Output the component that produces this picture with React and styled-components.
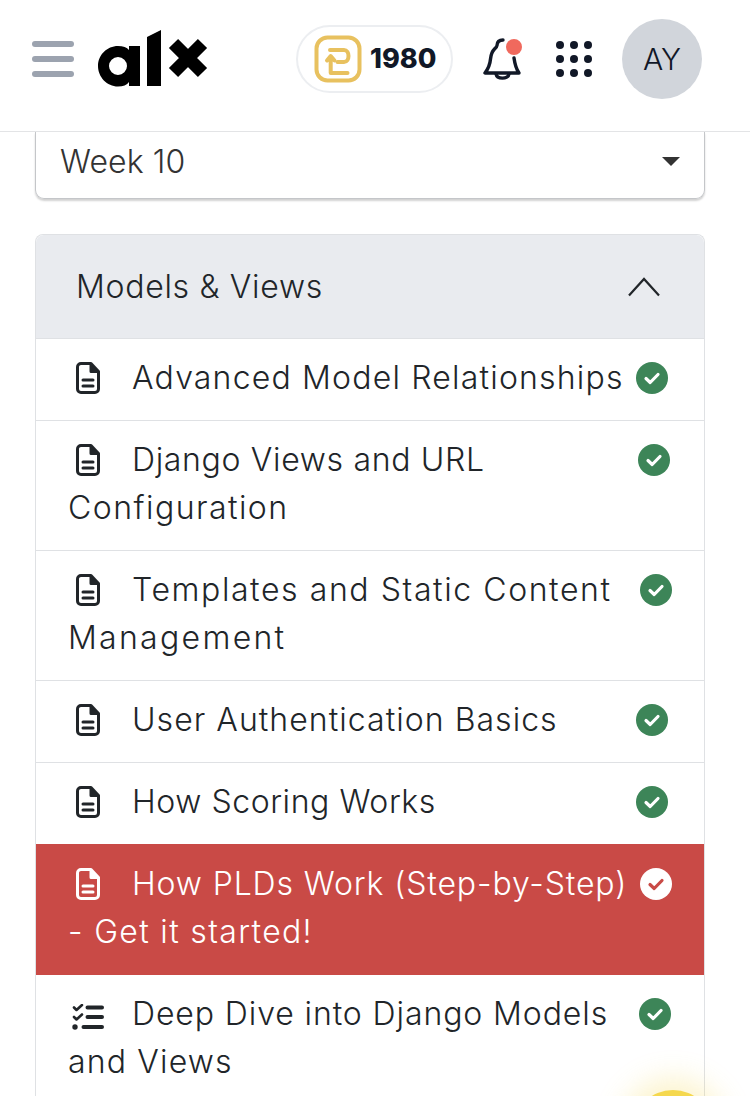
import React from 'react';
import styled, { createGlobalStyle } from 'styled-components';

const GlobalStyle = createGlobalStyle`
  html, body {
    margin: 0;
    padding: 0;
    background: #fff;
    font-family: "Inter", "Liberation Sans", sans-serif;
  }
`;

const Page = styled.div`
  position: relative;
  height: 1096px;
  overflow: hidden;
`;

const Header = styled.header`
  display: flex;
  align-items: center;
  justify-content: space-between;
  height: 117px;
  padding: 0 48px 14px 32px;
  border-bottom: 1px solid #e3e4e6;
`;

const Brand = styled.div`
  display: flex;
  align-items: center;
  gap: 24px;
`;

const Burger = styled.div`
  display: flex;
  flex-direction: column;
  gap: 9px;
  width: 42px;

  span {
    height: 6px;
    border-radius: 3px;
    background: #9ca3af;
  }
`;

const Actions = styled.div`
  display: flex;
  align-items: center;
`;

const Points = styled.div`
  display: flex;
  align-items: center;
  gap: 8px;
  height: 68px;
  width: 157px;
  box-sizing: border-box;
  padding-left: 16px;
  border: 2px solid #eceef1;
  border-radius: 34px;
  font-size: 27px;
  font-weight: 800;
  color: #111827;
`;

const Bell = styled.div`
  position: relative;
  width: 38px;
  height: 44px;
  margin: 0 35px 0 30px;

  svg {
    display: block;
  }
`;

const Dot = styled.span`
  position: absolute;
  top: 2px;
  right: -1px;
  width: 16px;
  height: 16px;
  border-radius: 50%;
  background: #f0695d;
`;

const Dots = styled.div`
  display: grid;
  grid-template-columns: repeat(3, 8px);
  gap: 6px;
  margin-right: 30px;

  span {
    width: 8px;
    height: 8px;
    border-radius: 50%;
    background: #111827;
  }
`;

const Avatar = styled.div`
  display: flex;
  align-items: center;
  justify-content: center;
  width: 80px;
  height: 80px;
  border-radius: 50%;
  background: #d1d5db;
  color: #111827;
  font-size: 30px;
  font-weight: 350;
`;

const Main = styled.main`
  padding: 0 45px 0 35px;
`;

const WeekSelect = styled.div`
  display: flex;
  align-items: center;
  justify-content: space-between;
  height: 67px;
  padding: 0 24px 8px 24px;
  box-sizing: border-box;
  border: 1px solid #c4c6c9;
  border-top: none;
  border-radius: 0 0 9px 9px;
  box-shadow: 0 2px 2px rgba(0, 0, 0, 0.18);
  font-size: 32px;
  font-weight: 350;
  color: #333;
  letter-spacing: 0.1px;
`;

const Caret = styled.span`
  width: 0;
  height: 0;
  border-left: 9px solid transparent;
  border-right: 9px solid transparent;
  border-top: 9px solid #333;
`;

const Card = styled.section`
  margin-top: 35px;
  border: 1px solid #dfe1e4;
  border-bottom: none;
  border-radius: 8px 8px 0 0;
`;

const CardHead = styled.div`
  display: flex;
  align-items: center;
  justify-content: space-between;
  height: 103px;
  padding: 0 44px 0 40px;
  background: #e9ebef;
  font-size: 32px;
  font-weight: 350;
  color: #212529;
  letter-spacing: 0.7px;
  border-radius: 8px 8px 0 0;
`;

const Row = styled.div`
  padding: 15px 32px 18px;
  border-top: 1px solid ${(p) => (p.$active ? '#c94a46' : '#dfe1e4')};
  font-size: 32px;
  font-weight: 350;
  line-height: 48px;
  white-space: nowrap;
  color: ${(p) => (p.$active ? '#fff' : '#212529')};
  background: ${(p) => (p.$active ? '#c94a46' : '#fff')};
  ${(p) => p.$active && 'position: relative; box-shadow: 0 1px 0 #c94a46;'}
`;

const Line = styled.span`
  letter-spacing: ${(p) => p.$track}px;
`;

const Glyph = styled.svg`
  vertical-align: -5px;
  margin: 0 ${(p) => p.$after}px 0 ${(p) => p.$before}px;
`;

const Check = styled.svg`
  float: right;
  margin: 8px ${(p) => p.$inset}px 0 12px;
`;

const Fab = styled.div`
  position: absolute;
  left: 633px;
  top: 1090px;
  width: 80px;
  height: 80px;
  border-radius: 50%;
  background: #f5d84e;
  box-shadow: 0 0 28px 12px rgba(245, 216, 78, 0.28);
`;

const Logo = () => (
  <svg width="110" height="57" viewBox="0 0 110 57">
    <path fillRule="evenodd" d="M20 16c5 0 9 1.500 11 4v-4h11v40H31v-4c-2 3-6 4.500-11 4.500C9 56.500 0 47 0 36s9-20 20-20zm0 11a9 9 0 1 0 0 18 9 9 0 0 0 0-18z" fill="#000" />
    <path d="M49 7L63 0v56H49z" fill="#000" />
    <path d="M75.500 13.500l29 29M104.500 13.500l-29 29" stroke="#000" strokeWidth="13" />
  </svg>
);

const CoinIcon = () => (
  <svg width="48" height="48" viewBox="0 0 48 48" fill="none" stroke="#e8c15f" strokeWidth="4" strokeLinecap="round" strokeLinejoin="round">
    <rect x="2.500" y="2.500" width="43" height="43" rx="11" />
    <path d="M16 15h14c6 0 6 12 0 12h-6.500" />
    <path d="M33.500 38H16.700V22M13 25.500l3.700-4.500 3.800 4.500" />
  </svg>
);

const BellIcon = () => (
  <svg width="38" height="44" viewBox="0 0 38 44" fill="none" stroke="#111827" strokeWidth="3.400" strokeLinecap="round" strokeLinejoin="round">
    <path d="M20 3c-4 0-6 1.500-6 5.500 0 1-1 2-2.500 3.500C9 14.500 8 17 7.500 22 7 28 5 32 2 36h34c-2.500-3.500-4-8-5-15" />
    <path d="M13 37c1 5.500 12 5.500 13 0" />
  </svg>
);

const DocIcon = () => (
  <Glyph $before={8} $after={32} width="24" height="32" viewBox="0 0 24 32" fill="none" stroke="currentColor" strokeWidth="3">
    <path d="M5 1.500h10l7.500 8V27a3.500 3.500 0 0 1-3.500 3.500H5A3.500 3.500 0 0 1 1.500 27V5A3.500 3.500 0 0 1 5 1.500z" strokeLinejoin="round" />
    <path d="M15 2v7.500h7" fill="currentColor" strokeLinejoin="round" />
    <path d="M7 18h10M7 24h10" strokeLinecap="round" />
  </Glyph>
);

const ListIcon = () => (
  <Glyph $before={4} $after={28} width="32" height="26" viewBox="0 0 32 26" fill="none" stroke="currentColor" strokeLinecap="round" strokeLinejoin="round">
    <path d="M2 3.500l2.500 2.500L10 1M2 13l2.500 2.500L10 10.500" strokeWidth="2.600" />
    <circle cx="3" cy="23" r="2.700" fill="currentColor" stroke="none" />
    <path d="M15.500 3.500H30M15.500 13H30M11.500 23H30" strokeWidth="4" />
  </Glyph>
);

const CheckBadge = ({ inset, active }) => (
  <Check $inset={inset} width="32" height="32" viewBox="0 0 32 32">
    <circle cx="16" cy="16" r="16" fill={active ? '#fff' : '#3d8558'} />
    <path d="M10 16.500l4.200 4L22 12.500" fill="none" stroke={active ? '#c94a46' : '#fff'} strokeWidth="3.200" strokeLinecap="round" strokeLinejoin="round" />
  </Check>
);

// each line has its own tracking so the substitute font keeps the reference line widths
const lessons = [
  { id: 1, lines: [['Advanced Model Relationships', 1.19]], inset: 4 },
  { id: 2, lines: [['Django Views and URL', 0.67], ['Configuration', 1.46]], inset: 2 },
  { id: 3, lines: [['Templates and Static Content', 1.58], ['Management', 2.3]], inset: 0 },
  { id: 4, lines: [['User Authentication Basics', 1.04]], inset: 4 },
  { id: 5, lines: [['How Scoring Works', 0.57]], inset: 4 },
  { id: 6, lines: [['How PLDs Work (Step-by-Step)', 0.88], ['- Get it started!', 1.33]], inset: 0, active: true },
  { id: 7, lines: [['Deep Dive into Django Models', 0.9], ['and Views', 1.17]], inset: 1, quiz: true },
];

const App = () => {
  return (
    <Page>
      <GlobalStyle />
      <Header>
        <Brand>
          <Burger>
            <span />
            <span />
            <span />
          </Burger>
          <Logo />
        </Brand>
        <Actions>
          <Points>
            <CoinIcon />
            1980
          </Points>
          <Bell>
            <BellIcon />
            <Dot />
          </Bell>
          <Dots>
            {[...Array(9).keys()].map((n) => (
              <span key={n} />
            ))}
          </Dots>
          <Avatar>AY</Avatar>
        </Actions>
      </Header>
      <Main>
        <WeekSelect>
          Week 10
          <Caret />
        </WeekSelect>
        <Card>
          <CardHead>
            Models &amp; Views
            <svg width="32" height="20" viewBox="0 0 32 20" fill="none" stroke="#212529" strokeWidth="2.200">
              <path d="M1 18.500L16 2l15 16.500" />
            </svg>
          </CardHead>
          {lessons.map((lesson) => (
            <Row key={lesson.id} $active={lesson.active}>
              <CheckBadge inset={lesson.inset} active={lesson.active} />
              {lesson.quiz ? <ListIcon /> : <DocIcon />}
              {lesson.lines.map(([text, track], i) => (
                <React.Fragment key={text}>
                  {i > 0 && <br />}
                  <Line $track={track}>{text}</Line>
                </React.Fragment>
              ))}
            </Row>
          ))}
        </Card>
      </Main>
      <Fab />
    </Page>
  );
};

export default App;
